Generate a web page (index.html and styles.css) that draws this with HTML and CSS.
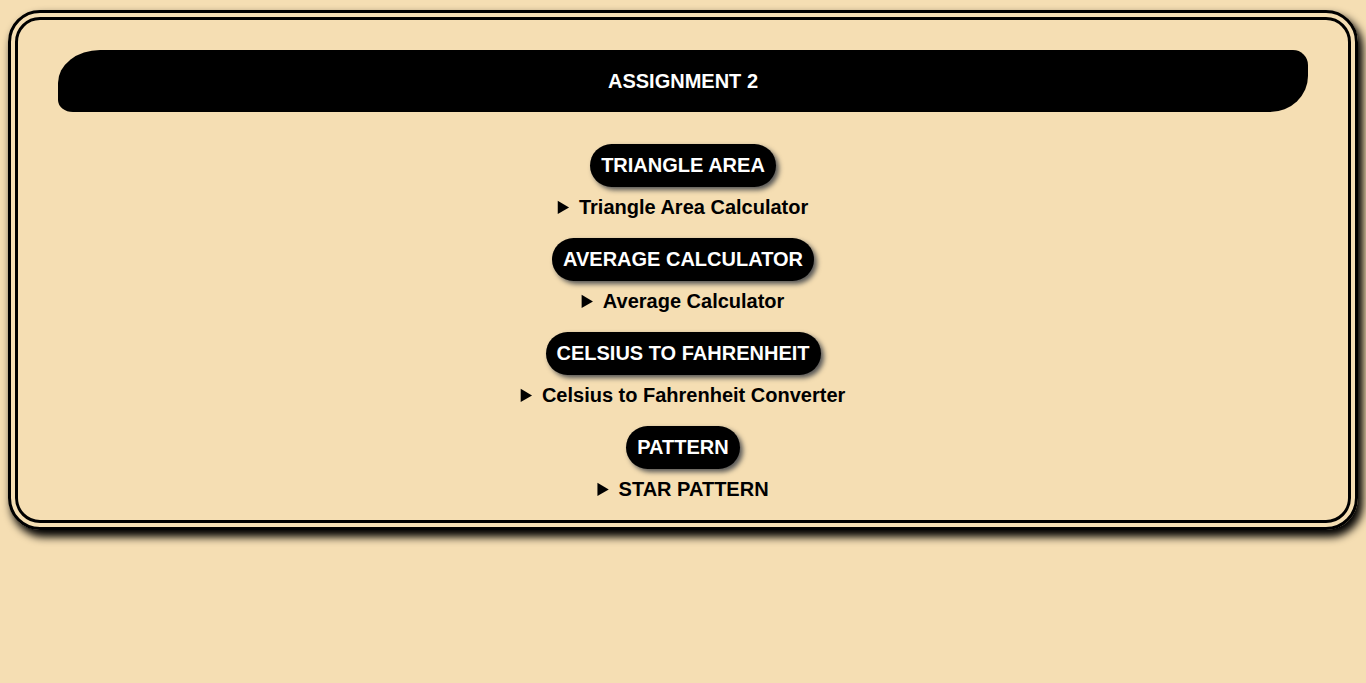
FILE: index.html
```html
<!DOCTYPE html>
<html>
<head>
<meta charset="utf-8">
<title>Assignment 2</title>
<link rel="stylesheet" href="styles.css">
</head>
<body>
<div class="box">
  <div class="header">ASSIGNMENT 2</div>
  <div class="list">
    <div class="item">
      <div class="btn">TRIANGLE AREA</div>
      <details class="det"><summary>Triangle Area Calculator</summary></details>
    </div>
    <div class="item">
      <div class="btn">AVERAGE CALCULATOR</div>
      <details class="det"><summary>Average Calculator</summary></details>
    </div>
    <div class="item">
      <div class="btn">CELSIUS TO FAHRENHEIT</div>
      <details class="det"><summary>Celsius to Fahrenheit Converter</summary></details>
    </div>
    <div class="item">
      <div class="btn">PATTERN</div>
      <details class="det"><summary>STAR PATTERN</summary></details>
    </div>
  </div>
</div>
</body>
</html>
```
FILE: styles.css
```css
html, body {
  margin: 0;
  background: #f5deb3;
}
body {
  padding: 10px 8px 0 8px;
  font-family: "Liberation Sans", Arial, sans-serif;
  height: 673px;
  box-sizing: border-box;
}
.box {
  border: 10px double #000;
  border-radius: 32px;
  box-shadow: 4px 6px 8px 1px #000;
  padding: 30px 40px 19px 40px;
}
.header {
  background: #000;
  color: #fff;
  font-weight: bold;
  font-size: 20px;
  height: 62px;
  line-height: 62px;
  text-align: center;
  border-radius: 42px 15px 38px 15px / 33px 15px 36px 12px;
}
.list {
  display: flex;
  flex-direction: column;
  align-items: center;
  padding-top: 32px;
  gap: 19px;
}
.item {
  display: flex;
  flex-direction: column;
  align-items: center;
  gap: 8px;
}
.btn {
  background: #000;
  color: #fff;
  font-weight: bold;
  font-size: 20px;
  line-height: 23px;
  padding: 10px 11px;
  border-radius: 22px;
  box-shadow: 3px 3px 5px #555;
}
.det summary {
  font-weight: bold;
  font-size: 20px;
  line-height: 24px;
  cursor: pointer;
}
```
